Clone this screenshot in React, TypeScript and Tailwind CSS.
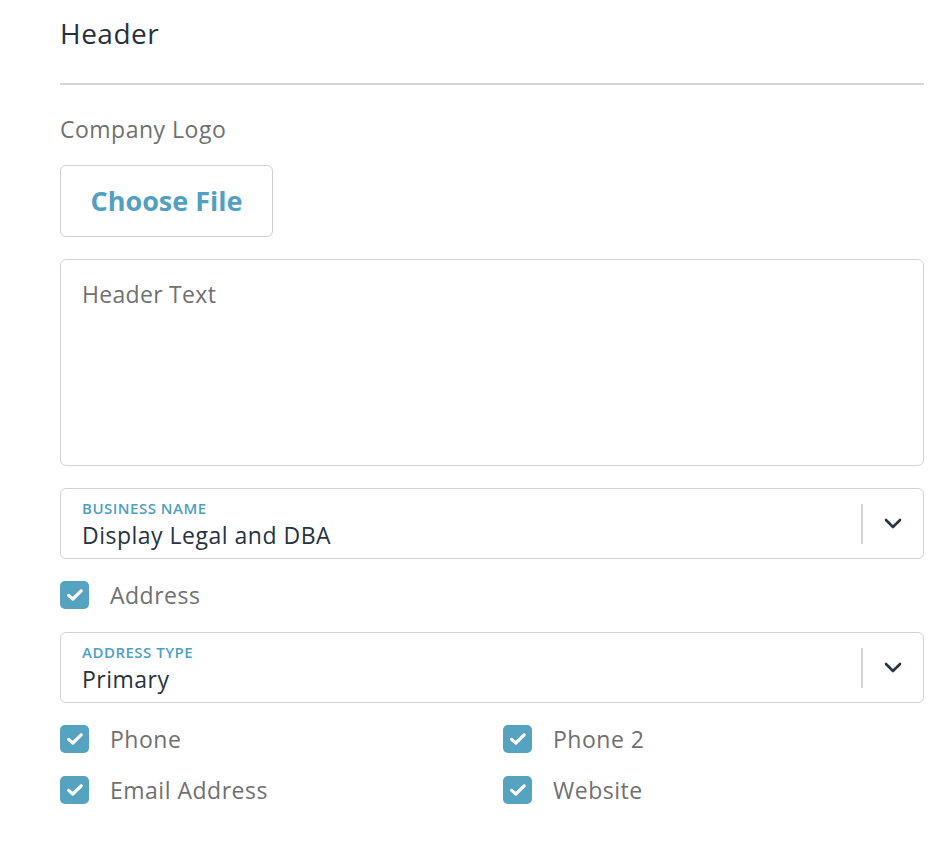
import React from "react";

const Check = ({ label }: { label: string }) => (
  <div className="flex items-center h-[28px]">
    <div className="w-[29px] h-[28px] rounded-[5px] bg-[#55a2c1] flex items-center justify-center shrink-0">
      <svg width="18" height="14" viewBox="0 0 18 14" fill="none">
        <path d="M2.6 7.4 L6.8 11 L15.2 2.8" stroke="white" strokeWidth="3.2" strokeLinecap="round" strokeLinejoin="round" />
      </svg>
    </div>
    <span className="ml-[21px] text-[23px] tracking-[0.5px] text-[#707070] leading-none">{label}</span>
  </div>
);

const Select = ({ label, value }: { label: string; value: string }) => (
  <div className="h-[71px] border border-[#d3d3d3] rounded-[6px] flex items-center">
    <div className="flex-1 pl-[21px]">
      <div className="text-[15px] font-semibold tracking-[0.5px] text-[#4f9fc0] leading-[18px]">{label}</div>
      <div className="text-[23px] tracking-[0.5px] text-[#263340] leading-[28px] mt-[4px]">{value}</div>
    </div>
    <div className="w-[2px] h-[40px] bg-[#d3d3d3]" />
    <div className="w-[60px] flex items-center justify-center">
      <svg width="18" height="11" viewBox="0 0 18 11" fill="none">
        <path d="M2 2 L9 9 L16 2" stroke="#263340" strokeWidth="2.6" strokeLinecap="round" strokeLinejoin="round" />
      </svg>
    </div>
  </div>
);

export default function App() {
  return (
    <div className="bg-white min-h-[854px] pl-[60px] pr-[12px] pt-[17px]" style={{ fontFamily: "'Open Sans', sans-serif" }}>
      <div className="text-[28px] tracking-[0.5px] text-[#26313d] leading-[32px]">Header</div>
      <div className="mt-[34px] h-[2px] bg-[#d5d5d5]" />
      <div className="mt-[30px] text-[23px] tracking-[0.5px] text-[#707070] leading-[28px]">Company Logo</div>
      <button className="mt-[22px] w-[213px] h-[72px] border border-[#cfcfcf] rounded-[6px] text-[27px] font-bold text-[#52a0c1] flex items-center justify-center">
        Choose File
      </button>
      <div className="mt-[22px] h-[207px] border border-[#d3d3d3] rounded-[6px] px-[21px] pt-[20px] text-[23px] tracking-[0.3px] text-[#707070] leading-[28px]">
        Header Text
      </div>
      <div className="mt-[22px]">
        <Select label="BUSINESS NAME" value="Display Legal and DBA" />
      </div>
      <div className="mt-[22px]">
        <Check label="Address" />
      </div>
      <div className="mt-[23px]">
        <Select label="ADDRESS TYPE" value="Primary" />
      </div>
      <div className="mt-[22px] grid grid-cols-[443px_1fr] gap-y-[23px]">
        <Check label="Phone" />
        <Check label="Phone 2" />
        <Check label="Email Address" />
        <Check label="Website" />
      </div>
    </div>
  );
}
